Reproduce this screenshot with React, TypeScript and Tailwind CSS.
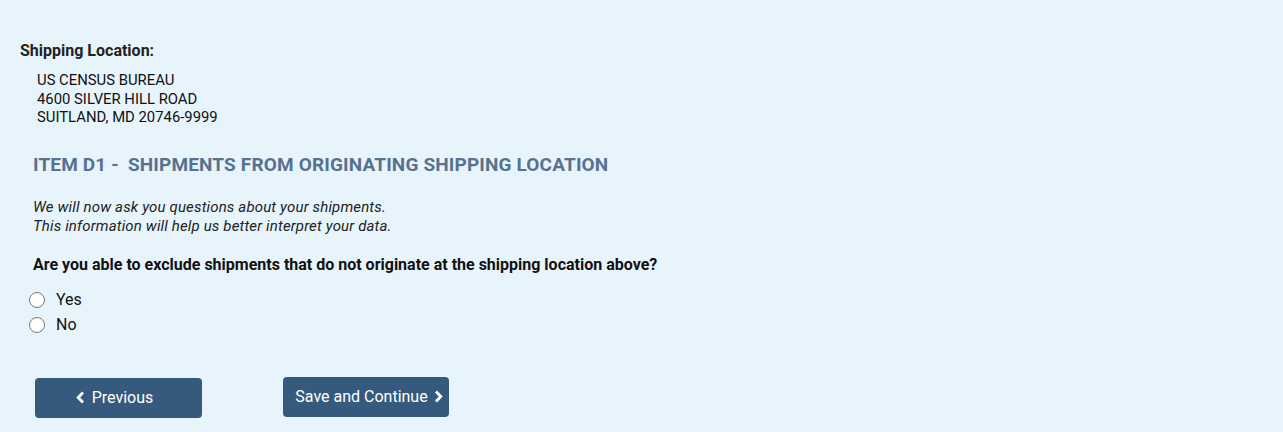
import React, { useState } from "react";

export default function App() {
  const [answer, setAnswer] = useState<string | null>(null);

  return (
    <div className="min-h-[432px] w-full bg-[#e8f4fc] font-['Roboto',sans-serif] text-[#222]">
      <div className="pt-[41px] pl-5">
        <div className="text-[16px] font-bold leading-[20px] text-[#222]">
          Shipping Location:
        </div>
        <div className="mt-[10px] pl-[17px] text-[14.85px] leading-[18.5px] text-[#111]">
          <div>US CENSUS BUREAU</div>
          <div>4600 SILVER HILL ROAD</div>
          <div>SUITLAND, MD 20746-9999</div>
        </div>
      </div>

      <div className="pl-[33px]">
        <h2 className="mt-[26px] flex items-baseline text-[19px] font-bold leading-[24px] tracking-[0.15px] text-[#57728f]">
          <span>ITEM D1 -</span>
          <span className="ml-[9px]">SHIPMENTS FROM ORIGINATING SHIPPING LOCATION</span>
        </h2>

        <div className="mt-[21px] text-[15px] italic leading-[19px] tracking-[0.15px] text-[#222]">
          <div>We will now ask you questions about your shipments.</div>
          <div>This information will help us better interpret your data.</div>
        </div>

        <div className="mt-[19px] text-[16px] font-bold leading-[20px] text-[#111]">
          Are you able to exclude shipments that do not originate at the shipping location above?
        </div>

        <div className="mt-[15px] -ml-[4px] flex flex-col gap-[5px]">
          {["Yes", "No"].map((opt) => (
            <label key={opt} className="flex items-center text-[16px] leading-[20px] text-[#111]">
              <input
                type="radio"
                name="exclude"
                checked={answer === opt}
                onChange={() => setAnswer(opt)}
                className="m-0 h-[16px] w-[16px] accent-[#365a7d]"
              />
              <span className="ml-[11px]">{opt}</span>
            </label>
          ))}
        </div>
      </div>

      <div className="mt-[42px] flex items-start pl-[35px]">
        <button className="mt-[1px] flex h-[40px] w-[167px] items-center justify-center rounded-[4px] bg-[#365a7d] pr-[8px] text-[16px] text-white">
          <svg width="9" height="13" viewBox="0 0 9 13" className="mr-[7px]">
            <path d="M7 1.5 L2.2 6.5 L7 11.5" fill="none" stroke="white" strokeWidth="2.8" />
          </svg>
          Previous
        </button>
        <button className="ml-[81px] flex h-[40px] w-[166px] items-center justify-center rounded-[4px] bg-[#365a7d] pl-[6px] text-[16px] text-white">
          Save and Continue
          <svg width="9" height="13" viewBox="0 0 9 13" className="ml-[6px]">
            <path d="M2 1.5 L6.8 6.5 L2 11.5" fill="none" stroke="white" strokeWidth="2.8" />
          </svg>
        </button>
      </div>
    </div>
  );
}
